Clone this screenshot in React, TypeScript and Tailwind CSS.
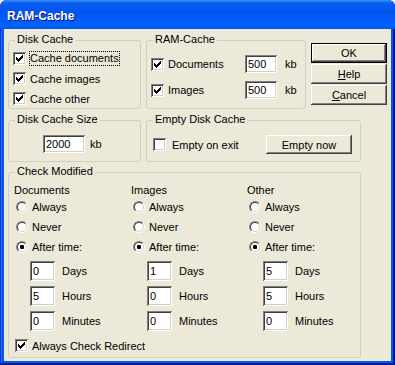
import React from "react";

const sunken =
  "shadow-[inset_1px_1px_#808080,inset_-1px_-1px_#ffffff,inset_2px_2px_#404040,inset_-2px_-2px_#d4d0c8]";

function Check({ checked }: { checked?: boolean }) {
  return (
    <span
      className={
        "w-[13px] h-[13px] shrink-0 bg-white flex items-center justify-center " +
        sunken
      }
    >
      {checked && (
        <svg width="7" height="7" viewBox="0 0 7 7" shapeRendering="crispEdges">
          <path
            d="M6 0h1v1h-1z M5 1h2v1h-2z M0 2h1v1h-1z M4 2h3v1h-3z M0 3h2v1h-2z M3 3h3v1h-3z M0 4h5v1h-5z M1 5h3v1h-3z M2 6h1v1h-1z"
            fill="#000"
          />
        </svg>
      )}
    </span>
  );
}

function Radio({ checked }: { checked?: boolean }) {
  return (
    <span className="w-[12px] h-[12px] shrink-0 rounded-full border border-t-[#808080] border-l-[#808080] border-r-white border-b-white flex">
      <span className="flex-1 rounded-full border border-t-[#404040] border-l-[#404040] border-r-[#d4d0c8] border-b-[#d4d0c8] bg-white flex items-center justify-center">
        {checked && <span className="w-[4px] h-[4px] rounded-[1px] bg-black" />}
      </span>
    </span>
  );
}

function TextBox({ value, cls }: { value: string; cls: string }) {
  return (
    <div className={"flex items-center bg-white pl-[3px] shrink-0 " + sunken + " " + cls}>
      {value}
    </div>
  );
}

function Btn({
  children,
  def,
  cls,
}: {
  children: React.ReactNode;
  def?: boolean;
  cls: string;
}) {
  return (
    <div
      className={
        "flex items-center justify-center bg-[#ece9d8] shrink-0 " +
        (def
          ? "border border-black shadow-[inset_-1px_-1px_#404040,inset_1px_1px_#ffffff,inset_-2px_-2px_#808080] "
          : "shadow-[inset_-1px_-1px_#404040,inset_1px_1px_#ffffff,inset_-2px_-2px_#808080] ") +
        cls
      }
    >
      {children}
    </div>
  );
}

function Group({
  label,
  cls,
  children,
}: {
  label: string;
  cls: string;
  children: React.ReactNode;
}) {
  return (
    <fieldset className={"border border-[#d0d0bf] rounded-[3px] min-w-0 shrink-0 " + cls}>
      <legend className="ml-[6px] px-[2px] pb-[2px] leading-[12px]">{label}</legend>
      {children}
    </fieldset>
  );
}

function Column({
  title,
  vals,
}: {
  title: string;
  vals: [string, string, string];
}) {
  const units = ["Days", "Hours", "Minutes"];
  return (
    <div className="flex flex-col">
      <div className="h-[13px] leading-[13px]">{title}</div>
      {["Always", "Never", "After time:"].map((l, i) => (
        <div key={l} className="h-[20px] flex items-center">
          <span className="ml-[2px] flex">
            <Radio checked={i === 2} />
          </span>
          <span className="ml-[4px]">{l}</span>
        </div>
      ))}
      <div className="mt-[4px] flex flex-col gap-[5px]">
        {vals.map((v, i) => (
          <div key={i} className="h-[20px] flex items-center">
            <TextBox value={v} cls="ml-[16px] w-[25px] h-[20px]" />
            <span className="ml-[7px]">{units[i]}</span>
          </div>
        ))}
      </div>
    </div>
  );
}

export default function App() {
  return (
    <div className="w-[395px] h-[365px] flex flex-col rounded-t-[7px] overflow-hidden bg-[#0058ee] shadow-[inset_-1px_-1px_#00138c,inset_1px_1px_#0831d9,inset_-2px_-2px_#001ea0,inset_2px_2px_#166aee] font-['Liberation_Sans',Arial,sans-serif] text-[11px] leading-[12px] text-black">
      <div className="h-[29px] shrink-0 flex items-center pl-[7px] pt-[2px] bg-[linear-gradient(180deg,#3d95ff,#0a5fef_10%,#0053ee_40%,#0062ff_85%,#005af5)] text-white font-bold text-[12px] [text-shadow:1px_1px_#0f1089]">
        RAM-Cache
      </div>
      <div className="flex-1 mx-[4px] mb-[4px] bg-[#ece9d8] pl-[4px] pt-[4px] flex flex-col">
        {/* Row 1 */}
        <div className="flex items-start">
          <Group label="Disk Cache" cls="w-[133px] h-[76px]">
            <div className="pl-[4px] pt-[5px] flex flex-col gap-[7px]">
              <div className="h-[13px] flex items-center">
                <Check checked />
                <span className="ml-[3px] border border-dotted border-black px-0 leading-[13px]">
                  Cache documents
                </span>
              </div>
              <div className="h-[13px] flex items-center">
                <Check checked />
                <span className="ml-[3px] border border-transparent">Cache images</span>
              </div>
              <div className="h-[13px] flex items-center">
                <Check checked />
                <span className="ml-[3px] border border-transparent">Cache other</span>
              </div>
            </div>
          </Group>
          <Group label="RAM-Cache" cls="ml-[5px] w-[160px] h-[76px]">
            <div className="pl-[4px] pt-[7px] flex flex-col gap-[6px]">
              <div className="h-[20px] flex items-center">
                <Check checked />
                <span className="ml-[4px] w-[77px]">Documents</span>
                <TextBox value="500" cls="w-[32px] h-[18px]" />
                <span className="ml-[8px]">kb</span>
              </div>
              <div className="h-[20px] flex items-center">
                <Check checked />
                <span className="ml-[4px] w-[77px]">Images</span>
                <TextBox value="500" cls="w-[32px] h-[18px]" />
                <span className="ml-[8px]">kb</span>
              </div>
            </div>
          </Group>
          <div className="ml-[5px] mt-[10px] w-[76px] flex flex-col gap-[1px]">
            <Btn def cls="h-[20px]">OK</Btn>
            <Btn cls="h-[20px]">
              <span>
                <span className="underline">H</span>elp
              </span>
            </Btn>
            <Btn cls="h-[20px]">
              <span>
                <span className="underline">C</span>ancel
              </span>
            </Btn>
          </div>
        </div>

        {/* Row 2 */}
        <div className="mt-[4px] flex items-start">
          <Group label="Disk Cache Size" cls="w-[133px] h-[49px]">
            <div className="pl-[34px] pt-[8px] flex items-center">
              <TextBox value="2000" cls="w-[42px] h-[18px]" />
              <span className="ml-[5px]">kb</span>
            </div>
          </Group>
          <Group label="Empty Disk Cache" cls="ml-[5px] w-[215px] h-[49px]">
            <div className="mt-[8px] h-[19px] pl-[6px] pr-[8px] flex items-center">
              <Check />
              <span className="ml-[6px]">Empty on exit</span>
              <Btn cls="ml-auto w-[86px] h-[19px]">Empty now</Btn>
            </div>
          </Group>
        </div>

        {/* Row 3 */}
        <div className="mt-[3px] flex">
          <Group label="Check Modified" cls="w-[353px] h-[193px]">
            <div className="pl-[5px] pt-[5px] flex flex-col">
              <div className="grid grid-cols-[117px_116px_1fr]">
                <Column title="Documents" vals={["0", "5", "0"]} />
                <Column title="Images" vals={["1", "0", "0"]} />
                <Column title="Other" vals={["5", "5", "0"]} />
              </div>
              <div className="mt-[8px] h-[13px] flex items-center">
                <span className="ml-[1px] flex">
                  <Check checked />
                </span>
                <span className="ml-[4px]">Always Check Redirect</span>
              </div>
            </div>
          </Group>
        </div>
      </div>
    </div>
  );
}
